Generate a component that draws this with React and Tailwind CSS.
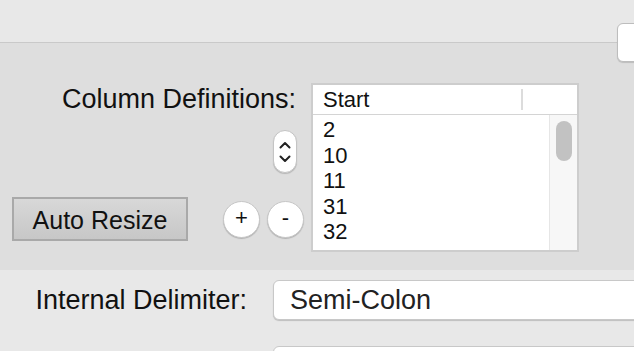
import React from 'react';

const rows = ['2', '10', '11', '31', '32'];

const Stepper = () => (
  <div className="w-[24px] h-[43px] rounded-full bg-white border border-[#c4c4c4] shadow-[0_1px_1px_rgba(0,0,0,0.18)] flex flex-col items-center justify-center gap-[6px]">
    <svg width="12" height="8" viewBox="0 0 12 8" fill="none">
      <path d="M1.5 6.5 L6 2 L10.5 6.5" stroke="#222" strokeWidth="2" strokeLinecap="round" strokeLinejoin="round" />
    </svg>
    <svg width="12" height="8" viewBox="0 0 12 8" fill="none">
      <path d="M1.5 1.5 L6 6 L10.5 1.5" stroke="#222" strokeWidth="2" strokeLinecap="round" strokeLinejoin="round" />
    </svg>
  </div>
);

const RoundButton = ({ label }) => (
  <button className="w-[37px] h-[37px] rounded-full bg-white border border-[#c6c6c6] shadow-[0_1px_1px_rgba(0,0,0,0.2)] flex items-center justify-center text-[22px] leading-none text-[#111] pb-[2px]">
    {label}
  </button>
);

export default function App() {
  return (
    <div
      className="relative w-[634px] h-[351px] overflow-hidden bg-[#e8e8e8] text-[#111]"
      style={{ fontFamily: '"Liberation Sans", Arial, sans-serif' }}
    >
      {/* top strip */}
      <div className="relative h-[43px] bg-[#e8e8e8] border-b border-[#c9c9c9]">
        <div className="absolute left-[617px] top-[23px] w-[40px] h-[39px] rounded-[6px] bg-white border border-[#bdbdbd] shadow-[0_1px_1px_rgba(0,0,0,0.15)]" />
      </div>

      {/* column definitions */}
      <div className="h-[227px] bg-[#dedede] pt-[40px] flex">
        <div className="w-[311px] shrink-0 flex flex-col">
          <div className="h-[32px] leading-[32px] text-[27px] text-right pr-[15px] whitespace-nowrap">
            Column Definitions:
          </div>
          <div className="mt-[15px] self-end mr-[14px]">
            <Stepper />
          </div>
          <div className="mt-[24px] flex items-center">
            <button className="ml-[12px] w-[176px] h-[44px] border-2 border-[#a9a9a9] bg-gradient-to-b from-[#d8d8d8] to-[#c7c7c7] text-[25px] leading-none text-[#111] flex items-center justify-center pt-[2px]">
              Auto Resize
            </button>
            <div className="ml-[35px] flex gap-[7px]">
              <RoundButton label="+" />
              <RoundButton label="-" />
            </div>
          </div>
        </div>

        <div className="w-[268px] h-[169px] shrink-0 border-2 border-[#cdcdcd] bg-white flex flex-col overflow-hidden">
          <div className="h-[30px] flex items-center border-b border-[#d4d4d4] shrink-0">
            <div className="w-[210px] pl-[10px] text-[22px] leading-[30px] border-r-2 border-[#dcdcdc] h-[21px] flex items-center">
              Start
            </div>
          </div>
          <div className="flex flex-1 min-h-0">
            <div className="flex-1 pl-[10px] pt-[2px] overflow-hidden">
              {rows.map((r) => (
                <div key={r} className="text-[22px] leading-[25.6px]">
                  {r}
                </div>
              ))}
            </div>
            <div className="w-[28px] bg-[#f7f7f7] border-l border-[#e6e6e6] flex justify-center pt-[6px]">
              <div className="w-[16px] h-[40px] rounded-full bg-[#c2c2c2]" />
            </div>
          </div>
        </div>
      </div>

      {/* delimiter section */}
      <div className="bg-[#e8e8e8] pt-[10px] flex flex-col gap-[26px]">
        <div className="flex items-center">
          <div className="w-[247px] shrink-0 text-right text-[27px] leading-none whitespace-nowrap">
            Internal Delimiter:
          </div>
          <div className="ml-[26px] w-[400px] shrink-0 h-[40px] rounded-[6px] bg-white border border-[#c8c8c8] shadow-[0_1px_1px_rgba(0,0,0,0.18)] flex items-center pl-[16px] text-[27px] text-[#222]">
            Semi-Colon
          </div>
        </div>
        <div className="flex">
          <div className="ml-[273px] w-[400px] shrink-0 h-[40px] rounded-[6px] bg-white border border-[#c8c8c8]" />
        </div>
      </div>
    </div>
  );
}
